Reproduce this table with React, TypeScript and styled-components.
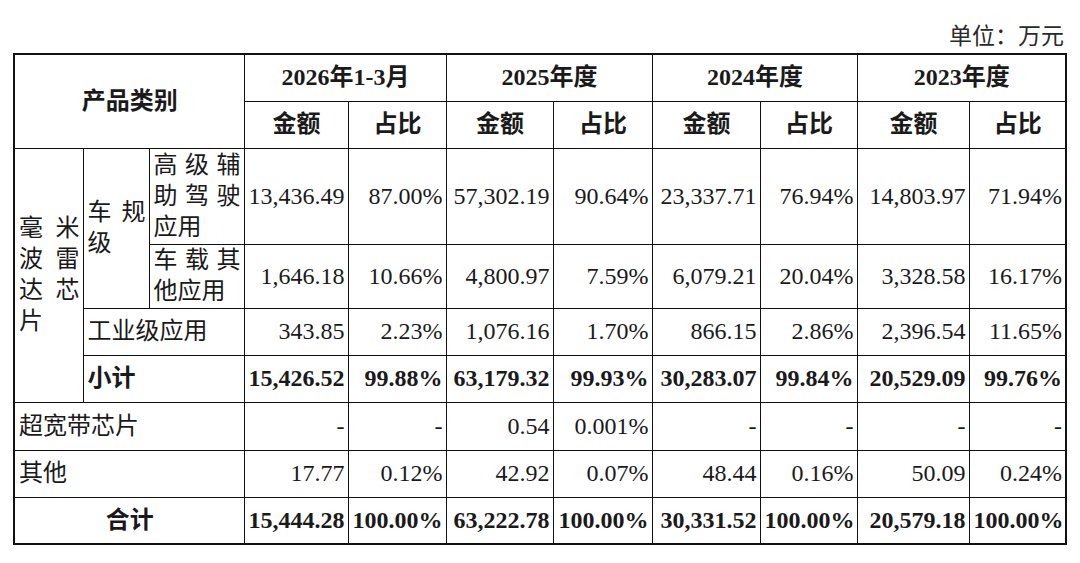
import styled, { createGlobalStyle } from "styled-components";

const GlobalStyle = createGlobalStyle`
  body {
    margin: 0;
    background: #ffffff;
  }
`;

const Page = styled.div`
  width: 1080px;
  height: 563px;
  box-sizing: border-box;
  padding: 22px 13px 0 13px;
  font-family: "Liberation Serif", "Noto Sans CJK SC", serif;
  color: #1a1a1a;
`;

const Unit = styled.div`
  text-align: right;
  font-size: 23px;
  line-height: 30px;
  padding-right: 3px;
  margin-bottom: 1px;
  color: #2a2a2a;
`;

const Table = styled.table`
  width: 1054px;
  table-layout: fixed;
  border-collapse: collapse;
  border: 2px solid #111;
  font-size: 24px;
`;

const Row = styled.tr<{ $h: number }>`
  height: ${(p) => p.$h}px;
`;

const Cell = styled.td<{
  $align?: "left" | "right" | "center" | "justify";
  $bold?: boolean;
}>`
  border: 1.5px solid #111;
  padding: 0 3px 0 4px;
  vertical-align: middle;
  text-align: ${(p) => p.$align ?? "right"};
  text-align-last: ${(p) => (p.$align === "justify" ? "left" : "auto")};
  font-weight: ${(p) => (p.$bold ? 700 : 400)};
  line-height: 31px;
  white-space: ${(p) => (p.$align === "justify" ? "normal" : "nowrap")};
  word-break: break-all;
`;

const colWidths = [69, 66, 95, 104, 98, 107, 99, 108, 97, 112, 97];
const periods = ["2026年1-3月", "2025年度", "2024年度", "2023年度"];

const ValueCells = ({ values, bold }: { values: string[]; bold?: boolean }) => (
  <>
    {values.map((v, i) => (
      <Cell key={i} $bold={bold}>
        {v}
      </Cell>
    ))}
  </>
);

export default function App() {
  return (
    <>
      <GlobalStyle />
      <Page>
        <Unit>单位：万元</Unit>
        <Table>
          <colgroup>
            {colWidths.map((w, i) => (
              <col key={i} style={{ width: w }} />
            ))}
          </colgroup>
          <tbody>
            <Row $h={47}>
              <Cell colSpan={3} rowSpan={2} $align="center" $bold>
                产品类别
              </Cell>
              {periods.map((p) => (
                <Cell key={p} colSpan={2} $align="center" $bold>
                  {p}
                </Cell>
              ))}
            </Row>
            <Row $h={47}>
              {periods.flatMap((p) => [
                <Cell key={p + "a"} $align="center" $bold>
                  金额
                </Cell>,
                <Cell key={p + "b"} $align="center" $bold>
                  占比
                </Cell>,
              ])}
            </Row>
            <Row $h={96}>
              <Cell rowSpan={4} $align="justify">
                毫米波雷达芯片
              </Cell>
              <Cell rowSpan={2} $align="justify">
                车规级
              </Cell>
              <Cell $align="justify">高级辅助驾驶应用</Cell>
              <ValueCells
                values={["13,436.49", "87.00%", "57,302.19", "90.64%", "23,337.71", "76.94%", "14,803.97", "71.94%"]}
              />
            </Row>
            <Row $h={64}>
              <Cell $align="justify">车载其他应用</Cell>
              <ValueCells
                values={["1,646.18", "10.66%", "4,800.97", "7.59%", "6,079.21", "20.04%", "3,328.58", "16.17%"]}
              />
            </Row>
            <Row $h={47}>
              <Cell colSpan={2} $align="left">
                工业级应用
              </Cell>
              <ValueCells
                values={["343.85", "2.23%", "1,076.16", "1.70%", "866.15", "2.86%", "2,396.54", "11.65%"]}
              />
            </Row>
            <Row $h={47}>
              <Cell colSpan={2} $align="left" $bold>
                小计
              </Cell>
              <ValueCells
                bold
                values={["15,426.52", "99.88%", "63,179.32", "99.93%", "30,283.07", "99.84%", "20,529.09", "99.76%"]}
              />
            </Row>
            <Row $h={48}>
              <Cell colSpan={3} $align="left">
                超宽带芯片
              </Cell>
              <ValueCells values={["-", "-", "0.54", "0.001%", "-", "-", "-", "-"]} />
            </Row>
            <Row $h={47}>
              <Cell colSpan={3} $align="left">
                其他
              </Cell>
              <ValueCells
                values={["17.77", "0.12%", "42.92", "0.07%", "48.44", "0.16%", "50.09", "0.24%"]}
              />
            </Row>
            <Row $h={47}>
              <Cell colSpan={3} $align="center" $bold>
                合计
              </Cell>
              <ValueCells
                bold
                values={["15,444.28", "100.00%", "63,222.78", "100.00%", "30,331.52", "100.00%", "20,579.18", "100.00%"]}
              />
            </Row>
          </tbody>
        </Table>
      </Page>
    </>
  );
}
